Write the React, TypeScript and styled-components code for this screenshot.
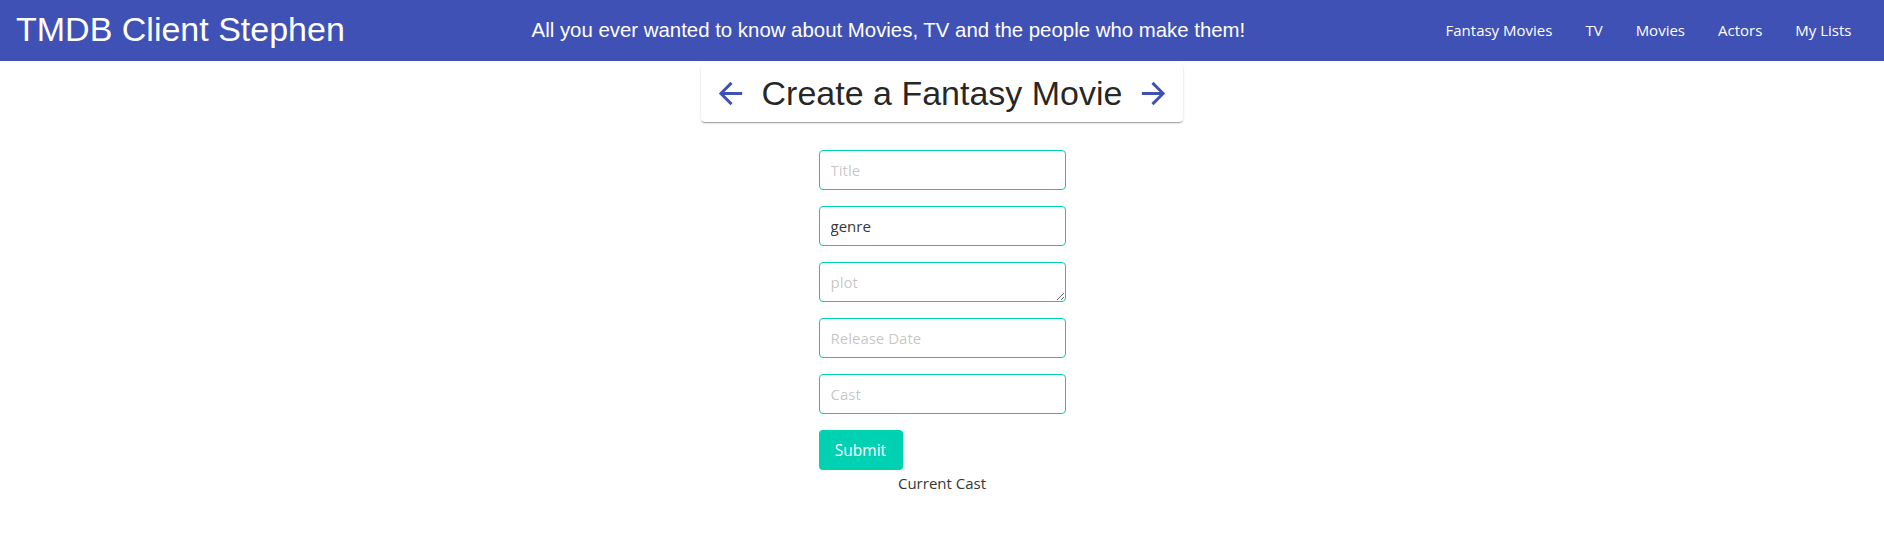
import * as React from 'react';
import styled, { createGlobalStyle } from 'styled-components';

const GlobalStyle = createGlobalStyle`
  body {
    margin: 0;
    background: #fff;
    font-family: "Open Sans", "Noto Sans", sans-serif;
    color: #363636;
  }
  * {
    box-sizing: border-box;
  }
`;

const HEADER_BLUE = '#3f51b5';
const TEAL = '#00d1b2';

const AppBar = styled.header`
  display: flex;
  align-items: center;
  height: 61px;
  padding: 0 16px;
  background: ${HEADER_BLUE};
  color: #fff;
`;

const SiteTitle = styled.h1`
  flex-grow: 1;
  margin: 0 0 2px;
  font-family: "Liberation Sans", Arial, sans-serif;
  font-size: 34px;
  font-weight: 400;
  line-height: normal;
`;

const Tagline = styled.h2`
  flex-grow: 1;
  margin: 0 0 0 3px;
  font-family: "Liberation Sans", Arial, sans-serif;
  font-size: 20.4px;
  font-weight: 400;
  line-height: normal;
`;

const Nav = styled.nav`
  display: flex;
  align-items: center;
  margin-bottom: 2px;
`;

const NavLink = styled.a`
  padding: 0 16.5px;
  color: #fff;
  font-size: 15px;
  text-decoration: none;
  cursor: pointer;
`;

const TitleCard = styled.div`
  display: flex;
  align-items: center;
  gap: 14px;
  width: max-content;
  height: 58px;
  margin: 3px auto 0;
  padding: 0 12px;
  border-radius: 4px;
  background: #fff;
  box-shadow: 0px 2px 1px -1px rgba(0, 0, 0, 0.2), 0px 1px 1px 0px rgba(0, 0, 0, 0.14),
    0px 1px 3px 0px rgba(0, 0, 0, 0.12);
`;

const PageHeading = styled.h3`
  margin: 0;
  font-family: "Liberation Sans", Arial, sans-serif;
  font-size: 34px;
  font-weight: 400;
  color: rgba(0, 0, 0, 0.87);
  line-height: normal;
`;

const ArrowButton = styled.button`
  display: flex;
  padding: 0;
  border: 0;
  background: none;
  color: ${HEADER_BLUE};
  cursor: pointer;
`;

const Form = styled.form`
  display: flex;
  flex-direction: column;
  align-items: center;
  margin-top: 28px;
`;

const Column = styled.div`
  display: flex;
  flex-direction: column;
  gap: 16px;
  width: 247px;
`;

const fieldStyles = `
  display: block;
  width: 100%;
  height: 40px;
  padding: 7px 11px;
  border: 1px solid ${TEAL};
  border-radius: 4px;
  font-family: "Open Sans", "Noto Sans", sans-serif;
  font-size: 15px;
  line-height: 24px;
  color: #363636;
  background: #fff;
  outline: none;
  &::placeholder {
    color: rgba(54, 54, 54, 0.3);
  }
`;

const Input = styled.input`
  ${fieldStyles}
`;

const TextArea = styled.textarea`
  ${fieldStyles}
  resize: vertical;
  overflow: hidden;
`;

const SubmitButton = styled.button`
  align-self: flex-start;
  width: 84px;
  height: 40px;
  padding: 0;
  border: 0;
  border-radius: 4px;
  background: ${TEAL};
  color: #fff;
  font-family: "Open Sans", "Noto Sans", sans-serif;
  font-size: 15.5px;
  cursor: pointer;
`;

const CastHeading = styled.div`
  margin-top: 1px;
  font-size: 15px;
  line-height: 24px;
  color: #363636;
  text-align: center;
`;

const ArrowIcon = ({ dir }: { dir: 'back' | 'forward' }) => (
  <svg width="35" height="35" viewBox="0 0 24 24" fill="currentColor">
    {dir === 'back' ? (
      <path d="M20 11H7.83l5.59-5.59L12 4l-8 8 8 8 1.41-1.41L7.83 13H20v-2z" />
    ) : (
      <path d="M12 4l-1.41 1.41L16.17 11H4v2h12.17l-5.58 5.59L12 20l8-8z" />
    )}
  </svg>
);

const NAV_ITEMS = ['Fantasy Movies', 'TV', 'Movies', 'Actors', 'My Lists'];

export default function App() {
  return (
    <>
      <GlobalStyle />
      <AppBar>
        <SiteTitle>TMDB Client Stephen</SiteTitle>
        <Tagline>All you ever wanted to know about Movies, TV and the people who make them!</Tagline>
        <Nav>
          {NAV_ITEMS.map((item) => (
            <NavLink key={item}>{item}</NavLink>
          ))}
        </Nav>
      </AppBar>

      <TitleCard>
        <ArrowButton aria-label="back">
          <ArrowIcon dir="back" />
        </ArrowButton>
        <PageHeading>Create a Fantasy Movie</PageHeading>
        <ArrowButton aria-label="forward">
          <ArrowIcon dir="forward" />
        </ArrowButton>
      </TitleCard>

      <Form onSubmit={(e) => e.preventDefault()}>
        <Column>
          <Input placeholder="Title" />
          <Input defaultValue="genre" />
          <TextArea placeholder="plot" rows={1} />
          <Input placeholder="Release Date" />
          <Input placeholder="Cast" />
          <SubmitButton type="submit">Submit</SubmitButton>
        </Column>
        <CastHeading>Current Cast</CastHeading>
      </Form>
    </>
  );
}
